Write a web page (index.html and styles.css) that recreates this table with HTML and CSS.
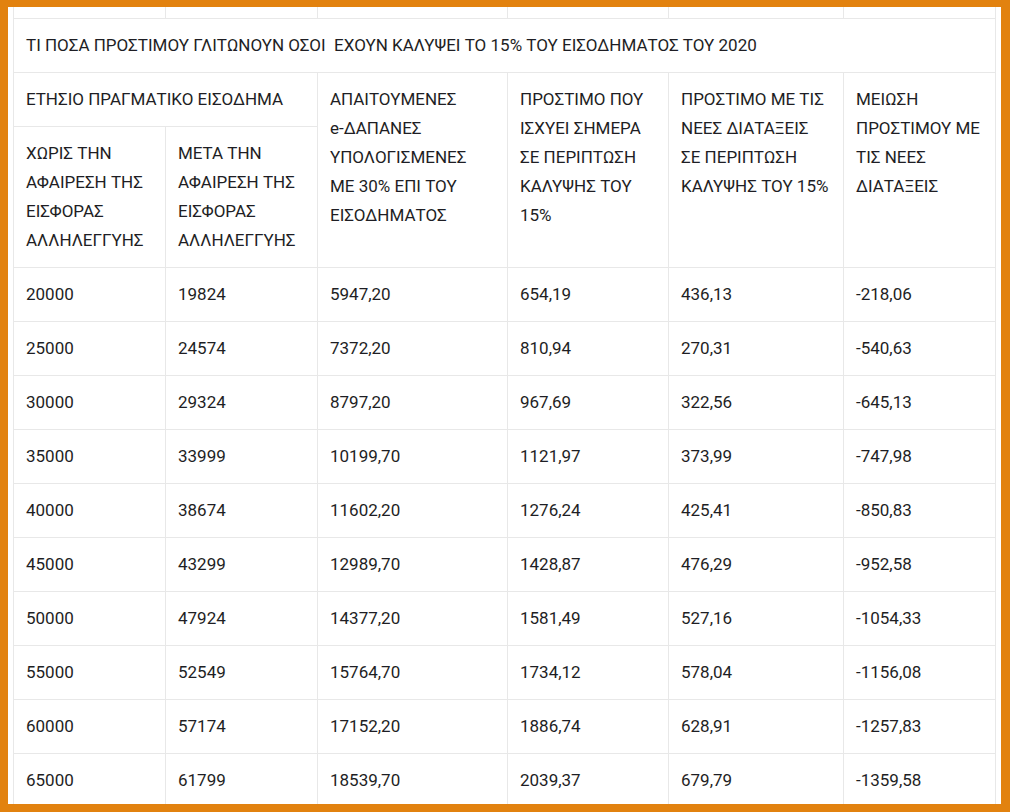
FILE: index.html
```html
<!DOCTYPE html>
<html lang="el">
<head>
<meta charset="utf-8">
<title>Πρόστιμα</title>
<link rel="stylesheet" href="styles.css">
</head>
<body>
<div class="frame">
  <div class="inner">
    <table class="grid">
      <colgroup>
        <col class="c1"><col class="c2"><col class="c3"><col class="c4"><col class="c5"><col class="c6">
      </colgroup>
      <tbody>
        <tr class="stub"><td></td><td></td><td></td><td></td><td></td><td></td></tr>
        <tr><td colspan="6">ΤΙ ΠΟΣΑ ΠΡΟΣΤΙΜΟΥ ΓΛΙΤΩΝΟΥΝ ΟΣΟΙ&nbsp; ΕΧΟΥΝ ΚΑΛΥΨΕΙ ΤΟ 15% ΤΟΥ ΕΙΣΟΔΗΜΑΤΟΣ ΤΟΥ 2020</td></tr>
        <tr class="head">
          <td colspan="2">ΕΤΗΣΙΟ ΠΡΑΓΜΑΤΙΚΟ ΕΙΣΟΔΗΜΑ</td>
          <td rowspan="2">ΑΠΑΙΤΟΥΜΕΝΕΣ <span class="nowrap">e-ΔΑΠΑΝΕΣ</span> ΥΠΟΛΟΓΙΣΜΕΝΕΣ ΜΕ 30% ΕΠΙ ΤΟΥ ΕΙΣΟΔΗΜΑΤΟΣ</td>
          <td rowspan="2">ΠΡΟΣΤΙΜΟ ΠΟΥ ΙΣΧΥΕΙ ΣΗΜΕΡΑ ΣΕ ΠΕΡΙΠΤΩΣΗ ΚΑΛΥΨΗΣ ΤΟΥ 15%</td>
          <td rowspan="2">ΠΡΟΣΤΙΜΟ ΜΕ ΤΙΣ ΝΕΕΣ ΔΙΑΤΑΞΕΙΣ ΣΕ ΠΕΡΙΠΤΩΣΗ ΚΑΛΥΨΗΣ ΤΟΥ 15%</td>
          <td rowspan="2">ΜΕΙΩΣΗ ΠΡΟΣΤΙΜΟΥ ΜΕ ΤΙΣ ΝΕΕΣ ΔΙΑΤΑΞΕΙΣ</td>
        </tr>
        <tr class="head">
          <td>ΧΩΡΙΣ ΤΗΝ ΑΦΑΙΡΕΣΗ ΤΗΣ ΕΙΣΦΟΡΑΣ ΑΛΛΗΛΕΓΓΥΗΣ</td>
          <td>ΜΕΤΑ ΤΗΝ ΑΦΑΙΡΕΣΗ ΤΗΣ ΕΙΣΦΟΡΑΣ ΑΛΛΗΛΕΓΓΥΗΣ</td>
        </tr>
        <tr><td>20000</td><td>19824</td><td>5947,20</td><td>654,19</td><td>436,13</td><td>-218,06</td></tr>
        <tr><td>25000</td><td>24574</td><td>7372,20</td><td>810,94</td><td>270,31</td><td>-540,63</td></tr>
        <tr><td>30000</td><td>29324</td><td>8797,20</td><td>967,69</td><td>322,56</td><td>-645,13</td></tr>
        <tr><td>35000</td><td>33999</td><td>10199,70</td><td>1121,97</td><td>373,99</td><td>-747,98</td></tr>
        <tr><td>40000</td><td>38674</td><td>11602,20</td><td>1276,24</td><td>425,41</td><td>-850,83</td></tr>
        <tr><td>45000</td><td>43299</td><td>12989,70</td><td>1428,87</td><td>476,29</td><td>-952,58</td></tr>
        <tr><td>50000</td><td>47924</td><td>14377,20</td><td>1581,49</td><td>527,16</td><td>-1054,33</td></tr>
        <tr><td>55000</td><td>52549</td><td>15764,70</td><td>1734,12</td><td>578,04</td><td>-1156,08</td></tr>
        <tr><td>60000</td><td>57174</td><td>17152,20</td><td>1886,74</td><td>628,91</td><td>-1257,83</td></tr>
        <tr><td>65000</td><td>61799</td><td>18539,70</td><td>2039,37</td><td>679,79</td><td>-1359,58</td></tr>
      </tbody>
    </table>
  </div>
</div>
</body>
</html>
```

FILE: styles.css
```css
html, body {
  margin: 0;
  padding: 0;
  background: #ffffff;
}

.frame {
  width: 1010px;
  height: 812px;
  box-sizing: border-box;
  border-style: solid;
  border-color: #e2820f;
  border-width: 7px 9px 8px 8px;
  background: #ffffff;
  overflow: hidden;
}

.inner {
  height: 100%;
  padding: 0 6px 0 5px;
  overflow: hidden;
}

.grid {
  width: 982px;
  table-layout: fixed;
  border-collapse: collapse;
  font-family: Roboto, "Noto Sans", sans-serif;
  font-size: 17px;
  line-height: 29px;
  color: #1e1e24;
}

.c1 { width: 152px; }
.c2 { width: 152px; }
.c3 { width: 190px; }
.c4 { width: 161px; }
.c5 { width: 175px; }
.c6 { width: 152px; }

.grid td {
  border: 1px solid #e8e8e8;
  padding: 12px 12px;
  vertical-align: middle;
  text-align: left;
}

.grid .head td {
  vertical-align: top;
}

.nowrap {
  white-space: nowrap;
}

.grid .stub td {
  border-top: none;
  padding: 0;
  height: 11px;
  line-height: 11px;
}
```
